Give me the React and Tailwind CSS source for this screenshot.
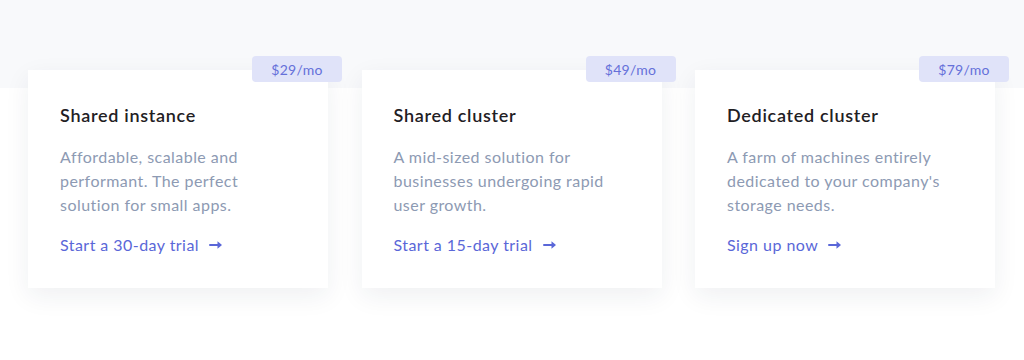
import React from "react";

const plans = [
  {
    price: "$29/mo",
    title: "Shared instance",
    lines: ["Affordable, scalable and", "performant. The perfect", "solution for small apps."],
    cta: "Start a 30-day trial",
  },
  {
    price: "$49/mo",
    title: "Shared cluster",
    lines: ["A mid-sized solution for", "businesses undergoing rapid", "user growth."],
    cta: "Start a 15-day trial",
  },
  {
    price: "$79/mo",
    title: "Dedicated cluster",
    lines: ["A farm of machines entirely", "dedicated to your company's", "storage needs."],
    cta: "Sign up now",
  },
];

const Arrow = () => (
  <svg width="14" height="10" viewBox="0 0 14 10" fill="none" className="ml-[10px]">
    <path d="M1 5h8.5" stroke="#5a67d8" strokeWidth="2" strokeLinecap="round" />
    <path d="M8.5 1.2L13 5l-4.5 3.8z" fill="#5a67d8" />
  </svg>
);

const PlanCard = ({ plan }) => (
  <div className="relative w-[300px] h-[218px] bg-white pt-[31px] px-8 pb-[30px] shadow-[0_8px_24px_rgba(30,40,70,0.07)]">
    <span className="absolute -top-[14px] -right-[14px] w-[90px] h-[26px] rounded bg-[#e0e3f9] text-[#6570d9] text-[14px] tracking-[0.3px] flex items-center justify-center">
      {plan.price}
    </span>
    <h3 className="text-[18px] leading-7 font-semibold tracking-[0.7px] text-[#1f2024]">{plan.title}</h3>
    <p className="mt-4 text-[16px] leading-6 tracking-[0.45px] text-[#8d9ab3]">
      {plan.lines.map((l) => (
        <span key={l} className="block whitespace-nowrap">{l}</span>
      ))}
    </p>
    <a href="#" className="mt-4 flex items-center text-[16px] leading-6 tracking-[0.45px] text-[#5a67d8]">
      {plan.cta}
      <Arrow />
    </a>
  </div>
);

export default function App() {
  return (
    <div className="h-[360px] w-[1024px] font-['Lato',sans-serif] bg-[linear-gradient(to_bottom,#f8f9fb_88px,#ffffff_88px)] pt-[70px] pl-[28px]">
      <div className="flex w-[967px] justify-between">
        {plans.map((p) => (
          <PlanCard key={p.title} plan={p} />
        ))}
      </div>
    </div>
  );
}
